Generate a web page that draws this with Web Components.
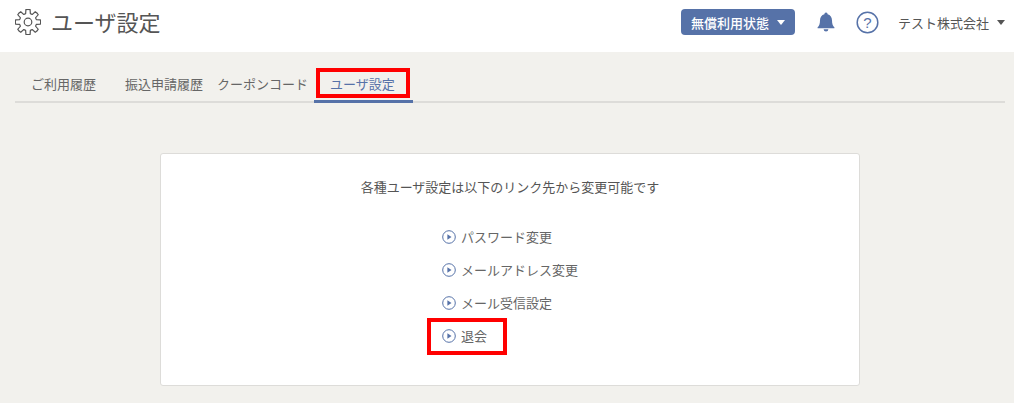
<!DOCTYPE html>
<html lang="ja"><head><meta charset="utf-8">
<style>
html,body{margin:0;padding:0;background:#f2f1ed;}
body{font-family:"Noto Sans CJK JP","Noto Sans",sans-serif;color:#555;width:1014px;height:403px;overflow:hidden;}
</style></head><body>
<app-header></app-header>
<tab-bar>
  <tab-item style="--pl:16px;--pr:14px">ご利用履歴</tab-item>
  <tab-item style="--pl:15px;--pr:6px">振込申請履歴</tab-item>
  <tab-item style="--pl:8px;--pr:6px">クーポンコード</tab-item>
  <tab-item active marked style="--pl:16px;--pr:18px">ユーザ設定</tab-item>
</tab-bar>
<settings-card>
  <span slot="lead">各種ユーザ設定は以下のリンク先から変更可能です</span>
  <link-row>パスワード変更</link-row>
  <link-row>メールアドレス変更</link-row>
  <link-row>メール受信設定</link-row>
  <link-row marked>退会</link-row>
</settings-card>
<script>
function define(name, html){
  customElements.define(name, class extends HTMLElement{
    constructor(){super();this.attachShadow({mode:'open'}).innerHTML=html;}
  });
}
const gearPath=(()=>{
  const cx=13,cy=13,n=8,ro=12.5,ri=8.8;let d='';
  for(let i=0;i<n;i++){
    const a=i*2*Math.PI/n-Math.PI/2,w=.17,g=.27;
    const p=(r,t)=>(cx+r*Math.cos(t)).toFixed(2)+' '+(cy+r*Math.sin(t)).toFixed(2);
    d+=(i?'L':'M')+p(ri,a-g)+'L'+p(ro,a-w)+'Q'+p(ro+.5,a)+' '+p(ro,a+w)+'L'+p(ri,a+g)+'Q'+p(ri-.5,a+Math.PI/n)+' '+p(ri,a+2*Math.PI/n-g);
  }
  return d+'Z';
})();
define('app-header',`<style>
:host{display:flex;align-items:center;height:52px;background:#fff;box-sizing:border-box;padding:0 9px 8px 15px;}
svg{display:block;flex:none}
h1{margin:0 0 3px 10px;font-size:22px;font-weight:400;color:#555;line-height:30px;flex:1;}
.plan{display:flex;align-items:center;gap:8px;height:26px;box-sizing:border-box;padding:0 10px;margin-right:22px;background:#5672a8;color:#fff;border-radius:4px;font-size:13px;font-weight:500;}
.tri{width:0;height:0;border:4.5px solid transparent;border-top:5px solid currentColor;border-bottom:0;}
.bell{margin-right:21px}
.help{margin-right:19px}
.user{display:flex;align-items:center;gap:8px;font-size:13px;color:#555}
</style>
<svg width="26" height="26" viewBox="0 0 26 26" fill="none" stroke="#555" stroke-width="1.2"><path d="${gearPath}"/><circle cx="13" cy="13" r="3.800"/></svg>
<h1>ユーザ設定</h1>
<div class="plan">無償利用状態<span class="tri"></span></div>
<svg class="bell" width="18" height="20" viewBox="0 0 18 20" fill="#5672a8"><path d="M9 0.5a1.6 1.6 0 0 1 1.6 1.7C13.4 2.9 15 5.2 15 8.2c0 4 .9 5.6 2.4 7.1v.9H.6v-.9C2.100 13.800 3 12.200 3 8.200c0-3 1.600-5.300 4.400-6A1.600 1.600 0 0 1 9 .5z"/><path d="M6.600 17.300h4.800A2.400 2.400 0 0 1 9 19.500a2.400 2.400 0 0 1-2.400-2.200z"/></svg>
<svg class="help" width="23" height="23" viewBox="0 0 23 23"><circle cx="11.500" cy="11.500" r="10.300" fill="none" stroke="#5672a8" stroke-width="1.500"/><text x="11.500" y="16.500" text-anchor="middle" font-size="15" font-family="Liberation Sans" fill="#5672a8">?</text></svg>
<div class="user">テスト株式会社<span class="tri"></span></div>`);
define('tab-bar',`<style>
:host{display:flex;margin:17px 9px 0 15px;height:34px;box-sizing:border-box;border-bottom:2px solid #dddcd9;}
</style><slot></slot>`);
define('tab-item',`<style>
:host{display:block;position:relative;height:34px;box-sizing:border-box;padding:5px var(--pr) 0 var(--pl);font-size:13px;line-height:20px;color:#666;}
:host([active]){color:#5672a8;border-bottom:3px solid #5672a8;}
:host([marked])::after{content:"";position:absolute;left:2px;right:3px;top:-1px;height:30px;box-sizing:border-box;border:4px solid #f00;}
</style><slot></slot>`);
define('settings-card',`<style>
:host{display:block;width:700px;height:233px;box-sizing:border-box;margin:50px auto 0 160px;background:#fff;border:1px solid #dddcd9;border-radius:3px;padding-top:23px;font-size:13px;color:#555;}
.lead{text-align:center;line-height:20px;margin-bottom:30px;}
.links{display:flex;flex-direction:column;gap:13px;margin-left:281px;}
</style><div class="lead"><slot name="lead"></slot></div><div class="links"><slot></slot></div>`);
define('link-row',`<style>
:host{display:flex;align-items:center;gap:5px;position:relative;height:20px;line-height:20px;font-size:13px;color:#666;}
:host([marked])::after{content:"";position:absolute;left:-15px;top:-8px;width:80px;height:37px;box-sizing:border-box;border:4px solid #f00;}
svg{flex:none}
</style><svg width="14" height="14" viewBox="0 0 14 14"><circle cx="7" cy="7" r="6.300" fill="none" stroke="#5672a8" stroke-width="1"/><path d="M5.400 4.300v5.400L9.500 7z" fill="#5672a8"/></svg><slot></slot>`);
</script>
</body></html>
